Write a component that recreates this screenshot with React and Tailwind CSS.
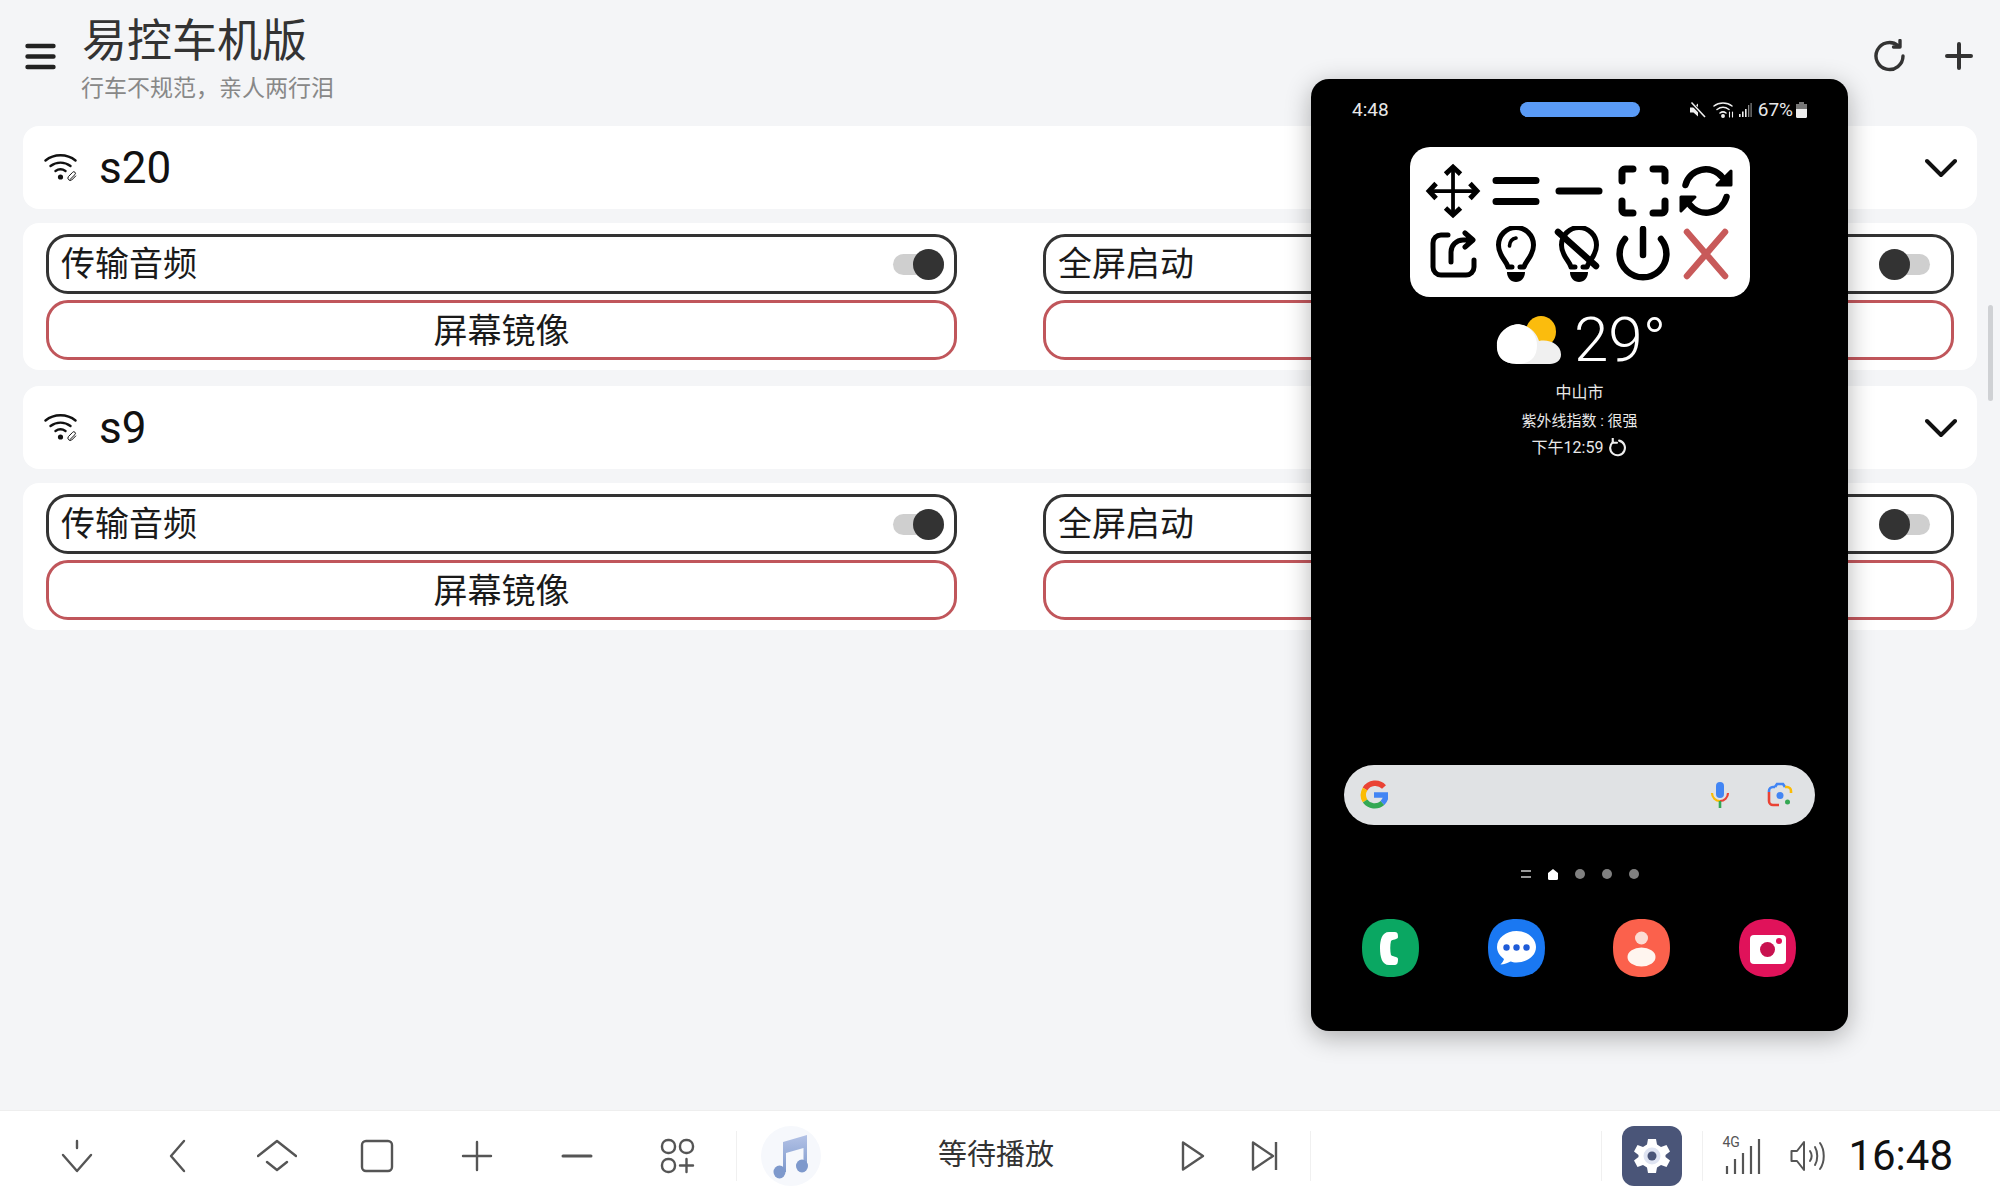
import React from 'react';

function Switch({ on, className }) {
  return (
    <div className={`relative w-[51px] h-[31px] flex items-center ${className}`}>
      <div className="w-full h-[21px] rounded-full bg-[#cfcfcf]" />
      <div className={`absolute top-0 w-[31px] h-[31px] rounded-full bg-[#333333] ${on ? 'right-0' : 'left-0'}`} />
    </div>
  );
}

function WifiLink() {
  return (
    <svg width="34" height="28" viewBox="0 0 34 28" fill="none" stroke="#111" strokeLinecap="round">
      <path d="M1.5 6.5C10 -0.5 23 -0.5 31.5 6.5" strokeWidth="2.4" />
      <path d="M6.5 12C12.5 7.5 20.5 7.5 26.5 12" strokeWidth="2.4" />
      <path d="M11.5 17C14.5 15 18.5 15 21.5 17" strokeWidth="2.4" />
      <circle cx="16.5" cy="23" r="2.6" fill="#111" stroke="none" />
      <path d="M26 25.5L31 20.5a1.6 1.6 0 0 0-2.4-2.2L24.4 22.6a2.4 2.4 0 0 0 3.3 3.4l4-4" strokeWidth="1" />
    </svg>
  );
}

function DeviceCard({ name }) {
  return (
    <>
      <div className="mx-[23px] h-[83px] rounded-[16px] bg-white flex items-center pl-[21px] pr-[20px]">
        <WifiLink />
        <span className="ml-[21px] text-[44px] leading-none text-[#111]">{name}</span>
        <svg className="ml-auto" width="32" height="20" viewBox="0 0 32 20" fill="none" stroke="#111" strokeWidth="4" strokeLinecap="round" strokeLinejoin="round">
          <path d="M2 3L16 17L30 3" />
        </svg>
      </div>
      <div className="mx-[23px] mt-[14px] rounded-[16px] bg-white px-[23px] pt-[11px] pb-[10px] grid grid-cols-2 gap-x-[86px] gap-y-[6px]">
        <div className="h-[60px] rounded-[22px] border-[3px] border-[#333333] flex items-center pl-[12px]">
          <span className="text-[34px] leading-none text-[#1a1a1a]">传输音频</span>
          <Switch on className="ml-auto mr-[10px]" />
        </div>
        <div className="h-[60px] rounded-[22px] border-[3px] border-[#333333] flex items-center pl-[12px]">
          <span className="text-[34px] leading-none text-[#1a1a1a]">全屏启动</span>
          <Switch className="ml-auto mr-[21px]" />
        </div>
        <div className="h-[60px] rounded-[22px] border-[3px] border-[#c0565b] flex items-center justify-center pt-[2px]">
          <span className="text-[34px] leading-none text-[#1a1a1a]">屏幕镜像</span>
        </div>
        <div className="h-[60px] rounded-[22px] border-[3px] border-[#c0565b]" />
      </div>
    </>
  );
}

function ToolIcon({ children }) {
  return (
    <div className="flex items-center justify-center">
      <svg width="56" height="56" viewBox="0 0 56 56" fill="none" stroke="#000" strokeLinecap="round" strokeLinejoin="round">
        {children}
      </svg>
    </div>
  );
}

function FloatToolbar() {
  const bulb = 'M20 41C18 34 10.500 30 10.500 19A17.500 17.500 0 0 1 45.500 19C45.500 30 38 34 36 41H32M20 41H24';
  const cap = 'M19 46H37C37 52 33 56 28 56C23 56 19 52 19 46Z';
  return (
    <div className="mx-auto mt-[31px] w-[340px] h-[150px] rounded-[20px] bg-white p-[12px] grid grid-cols-5 grid-rows-2">
      <ToolIcon>
        <g transform="translate(1.700 1.700) scale(0.94)">
          <path d="M28 3V53M3 28H53" strokeWidth="4" />
          <path d="M20 10L28 2.5L36 10M20 46L28 53.5L36 46M10 20L2.5 28L10 36M46 20L53.5 28L46 36" strokeWidth="5.200" strokeLinecap="butt" strokeLinejoin="miter" />
        </g>
      </ToolIcon>
      <ToolIcon>
        <path d="M8 17.5H48M8 38.5H48" strokeWidth="7" />
      </ToolIcon>
      <ToolIcon>
        <path d="M8 28H48" strokeWidth="7" />
      </ToolIcon>
      <ToolIcon>
        <path d="M18 6H10a3 3 0 0 0-3 3V18M38 6H47a3 3 0 0 1 3 3V18M18 50H10a3 3 0 0 1-3-3V38M38 50H47a3 3 0 0 0 3-3V38" strokeWidth="7" />
      </ToolIcon>
      <ToolIcon>
        <path d="M7.5 22A21 21 0 0 1 44 14" strokeWidth="6.5" />
        <path d="M53 8V22H39Z" fill="#000" strokeWidth="3" />
        <g transform="rotate(180 28 28)">
          <path d="M7.5 22A21 21 0 0 1 44 14" strokeWidth="6.5" />
          <path d="M53 8V22H39Z" fill="#000" strokeWidth="3" />
        </g>
      </ToolIcon>
      <ToolIcon>
        <path d="M23 9H16a8 8 0 0 0-8 8V41a8 8 0 0 0 8 8H41a8 8 0 0 0 8-8V34" strokeWidth="5" />
        <path d="M26 36V26a12 12 0 0 1 12-12h9M40 7l8 7-8 7" strokeWidth="5" />
      </ToolIcon>
      <ToolIcon>
        <path d={bulb} strokeWidth="5" />
        <path d="M21.5 20Q22 13 28 12" strokeWidth="3.6" />
        <path d={cap} fill="#000" stroke="none" />
      </ToolIcon>
      <ToolIcon>
        <path d={bulb} strokeWidth="5" />
        <path d={cap} fill="#000" stroke="none" />
        <path d="M7 6L45 40" strokeWidth="6.5" />
      </ToolIcon>
      <ToolIcon>
        <path d="M10 13A23.4 23.4 0 1 0 46 13" strokeWidth="6.5" />
        <path d="M28 3V29" strokeWidth="6.5" />
      </ToolIcon>
      <ToolIcon>
        <path d="M9 6L47 50M47 6L9 50" stroke="#c85a5a" strokeWidth="6.5" />
      </ToolIcon>
    </div>
  );
}

function StatusIcons() {
  return (
    <div className="flex items-center justify-end text-[19px] leading-none text-[#e8e8e8]">
      <svg width="18" height="18" viewBox="0 0 18 18" fill="#eee" stroke="none">
        <path d="M1 6.5H4.5L9 2.5V15.5L4.5 11.5H1Z" />
        <path d="M2 1.5L16 16" stroke="#000" strokeWidth="3.5" />
        <path d="M2.5 1.5L16 16" stroke="#eee" strokeWidth="1.6" />
      </svg>
      <svg className="ml-[6px]" width="22" height="18" viewBox="0 0 22 18" fill="none" stroke="#eee" strokeWidth="1.5" strokeLinecap="round">
        <path d="M1 5C6 1 14 1 19 5M4 8.5C8 5.5 12 5.5 16 8.5M7 12C9 10.5 11 10.5 13 12" />
        <circle cx="10" cy="15" r="1.2" fill="#eee" />
        <path d="M16.5 11v5M19.5 16v-5" strokeWidth="1.1" />
      </svg>
      <svg className="ml-[3px]" width="14" height="18" viewBox="0 0 14 18" fill="#eee" stroke="none">
        <path d="M1 13h1.6v3H1zM4 10.5h1.6V16H4zM7 8h1.6v8H7z" />
        <path d="M10 4h1.3v12H10zM12.5 2h1.2v14h-1.2z" fill="#888" />
      </svg>
      <span className="ml-[6px]">67%</span>
      <svg className="ml-[3px]" width="11" height="16" viewBox="0 0 11 16">
        <path d="M3 0h5v2h3v5H0V2h3z" fill="#777" />
        <path d="M0 7h11v7.5a1.5 1.5 0 0 1-1.5 1.5h-8A1.5 1.5 0 0 1 0 14.500Z" fill="#eee" />
      </svg>
    </div>
  );
}

function GoogleG() {
  return (
    <svg width="28" height="30" viewBox="0 0 28 30" fill="none" strokeWidth="5.4">
      <path d="M24 7A12 12 0 0 0 5 9" stroke="#ea4335" />
      <path d="M5 9A12 12 0 0 0 5 21" stroke="#fbbc05" />
      <path d="M5 21A12 12 0 0 0 22.500 23" stroke="#34a853" />
      <path d="M22.500 23A12 12 0 0 0 26 15H14" stroke="#4285f4" />
    </svg>
  );
}

const squircle = 'M28.500 0C47 0 57 10 57 29C57 48 47 58 28.500 58C10 58 0 48 0 29C0 10 10 0 28.500 0Z';

function PhoneWindow() {
  return (
    <div className="absolute left-[1311px] top-[79px] w-[537px] h-[952px] rounded-[18px] bg-black shadow-[0_6px_26px_rgba(0,0,0,0.3)] flex flex-col overflow-hidden">
      <div className="mt-[21px] h-[15px] px-[41px] grid grid-cols-[1fr_120px_1fr] items-center">
        <span className="text-[19px] leading-none text-[#e8e8e8]">4:48</span>
        <div className="h-[15px] rounded-full bg-[#5a9bf6]" />
        <StatusIcons />
      </div>
      <div className="mt-[1px]">
        <FloatToolbar />
      </div>
      <div className="mt-[17px] h-[52px] flex items-center justify-center">
        <svg width="66" height="50" viewBox="0 0 66 48" preserveAspectRatio="none">
          <circle cx="45" cy="16" r="15" fill="#fbbc0d" />
          <path d="M24 47C15 47 2 46 1 32C0 20 12 8 24 9C34 10 41 18 43 25C53 23 65 28 65 38C65 44 60 47 54 47Z" fill="#f0f0f0" />
          <path d="M24 47C15 47 2 46 1 30C0 18 12 8 24 9C34 10 41 20 41 29C41 40 35 46 24 47Z" fill="#ffffff" />
        </svg>
        <span className="ml-[12px] mr-[-3px] text-[62px] leading-none font-light text-white">29°</span>
      </div>
      <div className="mt-[19px] flex flex-col items-center text-[15px] leading-none text-[#e8e8e8]">
        <span className="text-[16px]">中山市</span>
        <span className="mt-[13px]">紫外线指数 : 很强</span>
        <div className="mt-[9px] flex items-center text-[16px]">
          <span>下午12:59</span>
          <svg className="ml-[5px]" width="19" height="19" viewBox="0 0 18 18" fill="none" stroke="#eee" strokeWidth="2" strokeLinecap="round" strokeLinejoin="round">
            <path d="M10.500 2.500A7 7 0 1 1 4.500 4" />
            <path d="M4.500 0.500V4.500H8.500" />
          </svg>
        </div>
      </div>
      <div className="mx-[33px] mt-[308px] h-[60px] rounded-full bg-[#e0e2e4] flex items-center pl-[16px] pr-[22px]">
        <GoogleG />
        <svg className="ml-auto" width="20" height="28" viewBox="0 0 20 28" fill="none">
          <rect x="6" y="1" width="8" height="16" rx="4" fill="#4285f4" />
          <path d="M2 12A8 8 0 0 0 10 20" stroke="#fbbc05" strokeWidth="2.2" />
          <path d="M10 20A8 8 0 0 0 18 12" stroke="#ea4335" strokeWidth="2.2" />
          <path d="M10 20V27" stroke="#34a853" strokeWidth="2.6" />
        </svg>
        <svg className="ml-[37px]" width="26" height="26" viewBox="0 0 26 26" fill="none" strokeWidth="2.6">
          <path d="M8 5H6a4 4 0 0 0-4 4V10" stroke="#4285f4" />
          <path d="M8 5L10 2H16L18 5" stroke="#4285f4" />
          <path d="M18 5h2a4 4 0 0 1 4 4V11" stroke="#fbbc05" />
          <path d="M2 10V19a4 4 0 0 0 4 4H12" stroke="#ea4335" />
          <circle cx="13" cy="13.500" r="3.500" fill="#4285f4" />
          <circle cx="20.500" cy="20" r="2.500" fill="#34a853" />
        </svg>
      </div>
      <div className="mt-[43px] h-[12px] flex items-center justify-center gap-[17px]">
        <div className="w-[10px] flex flex-col gap-[4px]">
          <div className="h-[2px] bg-[#999]" />
          <div className="h-[2px] bg-[#999]" />
        </div>
        <svg width="10" height="11" viewBox="0 0 10 11">
          <path d="M5 0L10 4V9.500A1.500 1.500 0 0 1 8.500 11H1.500A1.500 1.500 0 0 1 0 9.500V4Z" fill="#fff" />
        </svg>
        <div className="w-[10px] h-[10px] rounded-full bg-[#808080]" />
        <div className="w-[10px] h-[10px] rounded-full bg-[#808080]" />
        <div className="w-[10px] h-[10px] rounded-full bg-[#808080]" />
      </div>
      <div className="mt-[39px] pl-[51px] flex gap-[68.500px]">
        <svg width="57" height="58" viewBox="0 0 57 58">
          <path d={squircle} fill="#0aa762" />
          <path d="M27 13H33C36 13 36 16 36 18C36 21 30 20 29 22C28 26 28 32 29 36C30 38 36 37 36 40C36 42 36 46 33 46H27C20 46 18 38 18 29C18 21 20 13 27 13Z" fill="#fff" />
        </svg>
        <svg width="57" height="58" viewBox="0 0 57 58">
          <path d={squircle} fill="#1a78f2" />
          <path d="M28.500 12C18 12 9 19 9 28C9 33 12 37 16 40C15.500 42 14 44 12.500 45.500C16 45.500 20 44 22.500 42.500C24 43 26 43.500 28.500 43.500C39 43.500 48 37 48 28C48 19 39 12 28.500 12Z" fill="#fff" />
          <circle cx="18.500" cy="28.500" r="3.200" fill="#1e5bd8" />
          <circle cx="28.500" cy="28.500" r="3.200" fill="#1e5bd8" />
          <circle cx="38.500" cy="28.500" r="3.200" fill="#1e5bd8" />
        </svg>
        <svg width="57" height="58" viewBox="0 0 57 58">
          <path d={squircle} fill="#fb614c" />
          <circle cx="28.500" cy="19" r="6.500" fill="#fcdcd3" />
          <ellipse cx="28.500" cy="38" rx="14" ry="9.500" fill="#fff5ef" />
        </svg>
        <svg width="57" height="58" viewBox="0 0 57 58">
          <path d={squircle} fill="#e0125a" />
          <rect x="11" y="16" width="36" height="29" rx="4" fill="#fff" />
          <circle cx="28.500" cy="30.500" r="7.500" fill="#c8114f" />
          <circle cx="40" cy="22" r="3" fill="#e0125a" />
        </svg>
      </div>
    </div>
  );
}

function BarIcon({ children }) {
  return (
    <div className="w-[100px] flex justify-center">
      <svg width="40" height="40" viewBox="0 0 40 40" fill="none" stroke="#555" strokeWidth="2.4" strokeLinecap="round" strokeLinejoin="round">
        {children}
      </svg>
    </div>
  );
}

function BottomBar() {
  return (
    <div className="mt-auto h-[90px] bg-white border-t border-[#eeeeee] flex items-center pl-[27px] pr-[47px]">
      <BarIcon>
        <path d="M20 5V12M6 19L20 35L34 19" />
      </BarIcon>
      <BarIcon>
        <path d="M27 5L14 20L27 35" />
      </BarIcon>
      <BarIcon>
        <path d="M1 20L20 5L39 20M10 26L20 34L30 26" />
      </BarIcon>
      <BarIcon>
        <rect x="5" y="5" width="30" height="30" rx="4" />
      </BarIcon>
      <BarIcon>
        <path d="M20 6V34M6 20H34" />
      </BarIcon>
      <BarIcon>
        <path d="M6 20H34" strokeWidth="3" />
      </BarIcon>
      <BarIcon>
        <rect x="5" y="4" width="13" height="13" rx="6" />
        <rect x="23" y="4" width="13" height="13" rx="6" />
        <rect x="5" y="23" width="13" height="13" rx="6" />
        <path d="M29.500 23V36M23 29.500H36" />
      </BarIcon>
      <div className="ml-[9px] w-px h-[50px] bg-[#f0f0f0]" />
      <div className="ml-[24px] w-[60px] h-[60px] rounded-full bg-[#f6f8fc] flex items-center justify-center">
        <svg width="40" height="46" viewBox="0 0 40 46">
          <defs>
            <linearGradient id="noteFill" x1="0" y1="0" x2="0" y2="1">
              <stop offset="0" stopColor="#b3c2e6" />
              <stop offset="1" stopColor="#7e99cc" />
            </linearGradient>
          </defs>
          <path d="M12 9L36 2V32H32.500V15L15 20V39H12Z" fill="url(#noteFill)" />
          <ellipse cx="8.500" cy="39" rx="6" ry="6.500" fill="#7e99cc" />
          <ellipse cx="31" cy="33" rx="6" ry="6.500" fill="#7e99cc" />
        </svg>
      </div>
      <div className="ml-[25px] w-[300px] text-center text-[29px] leading-none text-[#333]">等待播放</div>
      <div className="ml-[11px] w-[72px] flex justify-center">
        <svg width="24" height="32" viewBox="0 0 24 32" fill="none" stroke="#555" strokeWidth="2.4" strokeLinejoin="round">
          <path d="M2 2.500L22 16L2 29.500Z" />
        </svg>
      </div>
      <div className="w-[71px] flex justify-center">
        <svg width="28" height="32" viewBox="0 0 28 32" fill="none" stroke="#555" strokeWidth="2.4" strokeLinejoin="round">
          <path d="M2 2.500L22 16L2 29.500Z" />
          <path d="M25 2V30" />
        </svg>
      </div>
      <div className="ml-[10px] w-px h-[50px] bg-[#f0f0f0]" />
      <div className="ml-auto w-px h-[50px] bg-[#f0f0f0]" />
      <div className="ml-[20px] w-[60px] h-[60px] rounded-[12px] bg-[#4a5578] flex items-center justify-center">
        <svg width="36" height="36" viewBox="0 0 36 36">
          <path d="M14 1H22L23 6.500L27 9L32.500 7L36 13.500L31.500 17V19L36 22.500L32.500 29L27 27L23 29.500L22 35H14L13 29.500L9 27L3.500 29L0 22.500L4.500 19V17L0 13.500L3.500 7L9 9L13 6.500Z" fill="#fff" />
          <circle cx="18" cy="18" r="8.500" fill="#dfe4f2" />
          <circle cx="18" cy="18" r="4.500" fill="#4a5578" />
        </svg>
      </div>
      <div className="ml-[20px] w-px h-[50px] bg-[#f0f0f0]" />
      <div className="ml-[20px] relative w-[38px] h-[36px]">
        <span className="absolute -left-[1px] -top-[3px] text-[14px] leading-none text-[#555]">4G</span>
        <svg className="absolute left-0 top-0" width="38" height="36" viewBox="0 0 38 36" fill="none" stroke="#555" strokeWidth="2.200">
          <path d="M4 36V28M12 36V21M20 36V15M28 36V8M36 36V1" />
        </svg>
      </div>
      <svg className="ml-[29px]" width="38" height="34" viewBox="0 0 38 34" fill="none" stroke="#555" strokeWidth="2" strokeLinecap="round" strokeLinejoin="round">
        <path d="M1.500 12H7L14 3V31L7 22H1.500Z" />
        <path d="M20 12C22 15 22 19 20 22M25 8C28 13 28 21 25 26M30 4C35 11 35 23 30 30" />
      </svg>
      <span className="ml-[20px] text-[42px] leading-none text-[#111]">16:48</span>
    </div>
  );
}

export default function App() {
  return (
    <div className="relative w-[2000px] h-[1200px] overflow-hidden bg-[#f4f5f7] flex flex-col [font-family:Roboto,'Noto_Sans_CJK_SC',sans-serif]">
      <header className="h-[126px] flex items-start pt-[16px] pl-[25px] pr-[27px]">
        <svg className="mt-[27px]" width="31" height="27" viewBox="0 0 31 27" stroke="#222" strokeWidth="4.4" strokeLinecap="round">
          <path d="M2.500 3H28.500M2.500 13.500H28.500M2.500 24H28.500" />
        </svg>
        <div className="ml-[26px] flex flex-col">
          <span className="text-[45px] leading-[52px] text-[#333]">易控车机版</span>
          <span className="mt-[6px] -ml-[1px] text-[23px] leading-[30px] text-[#888]">行车不规范，亲人两行泪</span>
        </div>
        <svg className="ml-auto mt-[23px]" width="34" height="34" viewBox="0 0 34 34" fill="none" stroke="#333" strokeWidth="3.4" strokeLinecap="round" strokeLinejoin="round">
          <path d="M30 17A13.500 13.500 0 1 1 25 6.500" />
          <path d="M27 1.500V8H20.500" />
        </svg>
        <svg className="ml-[38px] mt-[26px]" width="28" height="28" viewBox="0 0 28 28" stroke="#333" strokeWidth="4" strokeLinecap="round">
          <path d="M14 2V26M2 14H26" />
        </svg>
      </header>
      <DeviceCard name="s20" />
      <div className="h-[16px] shrink-0" />
      <DeviceCard name="s9" />
      <div className="absolute left-[1988px] top-[305px] w-[5px] h-[96px] bg-[#cfd1d4] rounded-full" />
      <PhoneWindow />
      <BottomBar />
    </div>
  );
}
